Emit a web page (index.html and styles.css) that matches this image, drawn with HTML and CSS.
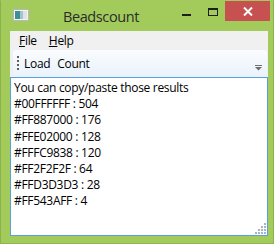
FILE: index.html
```html
<!DOCTYPE html>
<html lang="en">
<head>
  <meta charset="UTF-8">
  <title>Beadscount</title>
  <link rel="stylesheet" href="styles.css">
</head>
<body>
  <div class="window">
    <!-- Title bar -->
    <div class="titlebar">
      <svg class="app-icon" width="16" height="12" viewBox="0 0 16 12">
        <rect x="0.5" y="0.5" width="15" height="11" fill="#f4f4f4" stroke="#b8b8b8"/>
        <rect x="2" y="2" width="5" height="8" fill="#3f8f9a"/>
        <rect x="7" y="2" width="3" height="8" fill="#9fc7cf"/>
        <rect x="10" y="2" width="4" height="8" fill="#e2e2e2"/>
      </svg>
      <span class="title">Beadscount</span>
      <div class="caption-buttons">
        <span class="btn-min"></span>
        <span class="btn-max"></span>
        <span class="btn-close">
          <svg width="10" height="9" viewBox="0 0 10 9">
            <path d="M1 0.5 L9 8.5 M9 0.5 L1 8.5" stroke="#fff" stroke-width="2"/>
          </svg>
        </span>
      </div>
    </div>

    <!-- Client area -->
    <div class="client">
      <div class="menubar">
        <span class="menu-item"><u>F</u>ile</span>
        <span class="menu-item"><u>H</u>elp</span>
      </div>
      <div class="tray">
        <div class="toolbar">
          <span class="grip"></span>
          <span class="tool">Load</span>
          <span class="tool">Count</span>
          <svg class="overflow" width="8" height="6" viewBox="0 0 8 6">
            <rect x="0" y="0" width="7" height="1" fill="#6d6d6d"/>
            <path d="M0 2 H7 L3.5 5.5 Z" fill="#6d6d6d"/>
          </svg>
        </div>
      </div>
      <div class="results">
        <div>You can copy/paste those results</div>
        <div>#00FFFFFF : 504</div>
        <div>#FF887000 : 176</div>
        <div>#FFE02000 : 128</div>
        <div>#FFFC9838 : 120</div>
        <div>#FF2F2F2F : 64</div>
        <div>#FFD3D3D3 : 28</div>
        <div>#FF543AFF : 4</div>
        <svg class="sizegrip" width="11" height="11" viewBox="0 0 11 11">
          <g fill="#a7b4c8">
            <rect x="9" y="0" width="2" height="2"/>
            <rect x="6" y="3" width="2" height="2"/><rect x="9" y="3" width="2" height="2"/>
            <rect x="3" y="6" width="2" height="2"/><rect x="6" y="6" width="2" height="2"/><rect x="9" y="6" width="2" height="2"/>
            <rect x="0" y="9" width="2" height="2"/><rect x="3" y="9" width="2" height="2"/><rect x="6" y="9" width="2" height="2"/><rect x="9" y="9" width="2" height="2"/>
          </g>
        </svg>
      </div>
    </div>
  </div>
</body>
</html>
```

FILE: styles.css
```css
body {
  margin: 0;
  padding: 0;
  font-family: 'Open Sans', 'Noto Sans', sans-serif;
  background: #a3cb5b;
}

.window {
  width: 272px;
  height: 239px;
  border: 1px solid #8bb04c;
  border-top-color: #a3cb5b;
  background: #a3cb5b;
  padding-bottom: 3px;
  border-bottom: 1px solid #8fb551;
}

.titlebar {
  position: relative;
  height: 30px;
  display: flex;
  align-items: flex-start;
}

.app-icon {
  margin: 8px 0 0 12px;
}

.title {
  margin: 6px 0 0 34px;
  font-family: 'Open Sans', sans-serif;
  font-size: 14.5px;
  color: #2b2b2b;
  letter-spacing: -0.4px;
}

.caption-buttons {
  margin-left: auto;
  display: flex;
  align-items: flex-start;
}

.btn-min {
  width: 9px;
  height: 2px;
  background: #1e1e1e;
  margin: 13px 17px 0 0;
}

.btn-max {
  width: 8px;
  height: 5px;
  border: 1px solid #1e1e1e;
  border-top-width: 2px;
  margin: 7px 7px 0 0;
}

.btn-close {
  width: 45px;
  height: 20px;
  background: #c75050;
  display: flex;
  align-items: center;
  justify-content: center;
  margin-right: 3px;
}

.client {
  margin-left: 9px;
  width: 258px;
  height: 205px;
  background: #f0f0f0;
  display: flex;
  flex-direction: column;
  font-size: 12px;
  letter-spacing: -0.3px;
  color: #000;
}

.menubar {
  height: 19px;
  display: flex;
  align-items: center;
  padding-left: 9px;
  gap: 12px;
}

.menu-item u {
  text-decoration-thickness: 1px;
  text-underline-offset: 1px;
}

.tray {
  height: 27px;
  padding: 0 1px 0 3px;
}

.toolbar {
  height: 26px;
  background: linear-gradient(#fafcfe, #eaf2fb);
  border-radius: 3px;
  display: flex;
  align-items: center;
  padding-left: 4px;
  position: relative;
}

.grip {
  width: 2px;
  height: 14px;
  background: repeating-linear-gradient(#5e5e5e 0 2px, transparent 2px 4px);
  margin-right: 5px;
}

.tool {
  margin-right: 7px;
}

.overflow {
  position: absolute;
  right: 4px;
  bottom: 5px;
}

.results {
  flex: 1;
  position: relative;
  background: #fff;
  border: 1px solid #5a9ee4;
  padding: 2px 0 0 3px;
  line-height: 16.2px;
}

.sizegrip {
  position: absolute;
  right: 1px;
  bottom: 1px;
}
```
